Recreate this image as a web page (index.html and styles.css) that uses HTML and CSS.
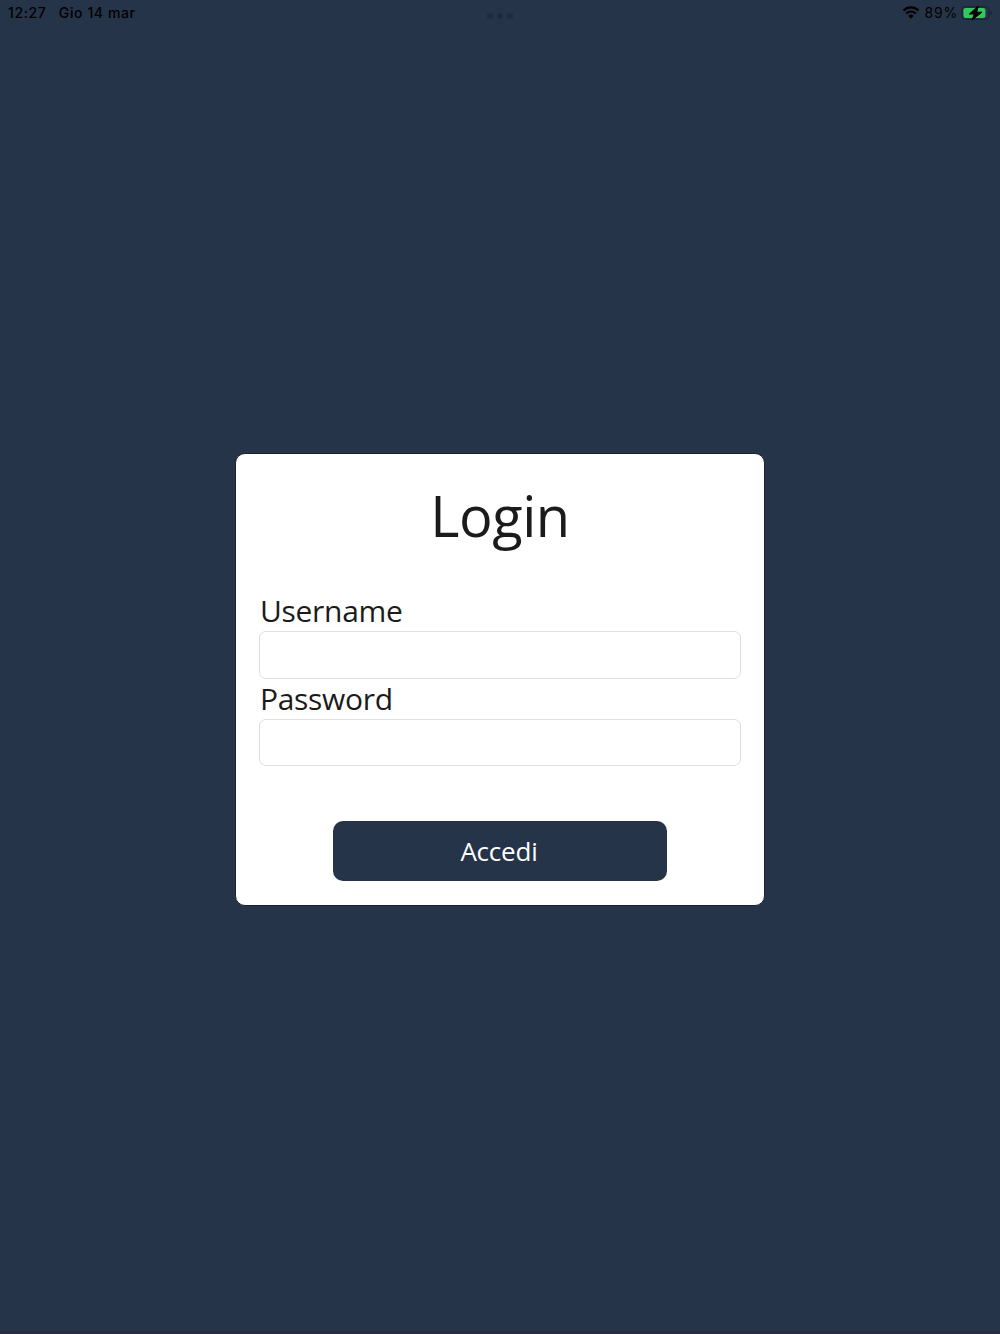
FILE: index.html
```
<!DOCTYPE html>
<html lang="it">
<head>
  <meta charset="UTF-8">
  <title>Login</title>
  <link rel="stylesheet" href="styles.css">
</head>
<body>
  <!-- Status bar -->
  <header class="status-bar">
    <div class="status-left">
      <span class="time">12:27</span>
      <span>Gio 14 mar</span>
    </div>
    <div class="dots">
      <span></span><span></span><span></span>
    </div>
    <div class="status-right">
      <svg class="wifi" width="18" height="13" viewBox="0 0 18 13">
        <path d="M1.5 4.5a10.7 10.7 0 0 1 15 0" fill="none" stroke="#000" stroke-width="2.3"/>
        <path d="M4.2 7.5a6.8 6.8 0 0 1 9.6 0" fill="none" stroke="#000" stroke-width="2.2"/>
        <path d="M6.3 9.9a3.9 3.9 0 0 1 5.4 0L9 12.7z"/>
      </svg>
      <span class="percent">89%</span>
      <svg class="battery" width="31" height="16" viewBox="0 0 31 16">
        <rect x="1" y="1.6" width="27" height="12.8" rx="3.8" fill="none" stroke="#1c2437" stroke-width="1.2"/>
        <path d="M29.2 5.8q1.6.8 1.6 2.2t-1.6 2.2z" fill="#1c2437"/>
        <rect x="2.4" y="3" width="22" height="10" rx="2.2" fill="#34c759"/>
        <path d="M17.2 1 8.3 9h5l-2.2 6L21 7.2h-5.3z" stroke="#000" stroke-width="1"/>
      </svg>
    </div>
  </header>

  <main class="page">
    <form class="login-card">
      <h1>Login</h1>
      <label for="username">Username</label>
      <input type="text" id="username">
      <label for="password">Password</label>
      <input type="password" id="password" class="password">
      <button type="button">Accedi</button>
    </form>
  </main>
</body>
</html>
```
FILE: styles.css
```
* {
  box-sizing: border-box;
}

body {
  margin: 0;
  height: 1334px;
  display: flex;
  flex-direction: column;
  font-family: 'Open Sans', sans-serif;
  background-color: #263449;
  border-bottom: 3px solid #292b42;
  color: #1b1b1b;
  overflow: hidden;
}

/* Status bar */
.status-bar {
  display: grid;
  grid-template-columns: 1fr auto 1fr;
  align-items: center;
  height: 25px;
  padding: 0 8px;
  font-family: Inter, sans-serif;
  font-size: 14px;
  font-weight: 500;
  line-height: 25px;
  color: #000;
}

.status-left {
  display: flex;
  gap: 12.5px;
  letter-spacing: 0.6px;
}

.dots {
  display: flex;
  gap: 4px;
  padding-top: 6px;
}

.dots span {
  width: 6px;
  height: 6px;
  border-radius: 50%;
  background-color: #1e2a40;
}

.status-right {
  display: flex;
  justify-content: flex-end;
  align-items: center;
}

.percent {
  margin: 0 3px 0 5px;
  font-weight: 400;
  letter-spacing: 0.8px;
}

/* Login card */
.page {
  flex: 1;
  display: flex;
  align-items: flex-start;
  justify-content: center;
  padding-top: 428px;
}

.login-card {
  display: flex;
  flex-direction: column;
  width: 530px;
  height: 453px;
  padding: 23px;
  background-color: #fff;
  border: 1px solid #1b222c;
  border-radius: 10px;
}

h1 {
  margin: 0 0 37px;
  font-size: 56px;
  font-weight: 400;
  line-height: 76px;
  letter-spacing: -0.5px;
  text-align: center;
}

label {
  padding-left: 1px;
  font-size: 30px;
  line-height: 41px;
  letter-spacing: -0.3px;
}

input {
  height: 48px;
  padding: 0 12px;
  font: inherit;
  font-size: 26px;
  border: 1px solid #dfdfdf;
  border-radius: 7px;
  background-color: #fff;
}

label[for="password"] {
  line-height: 40px;
}

input.password {
  height: 47px;
}

button {
  align-self: center;
  width: 334px;
  height: 60px;
  margin-top: 55px;
  padding: 0 2px 0 0;
  font-family: inherit;
  font-size: 26px;
  letter-spacing: -0.2px;
  color: #fff;
  background-color: #263449;
  border: none;
  border-radius: 10px;
}
```
